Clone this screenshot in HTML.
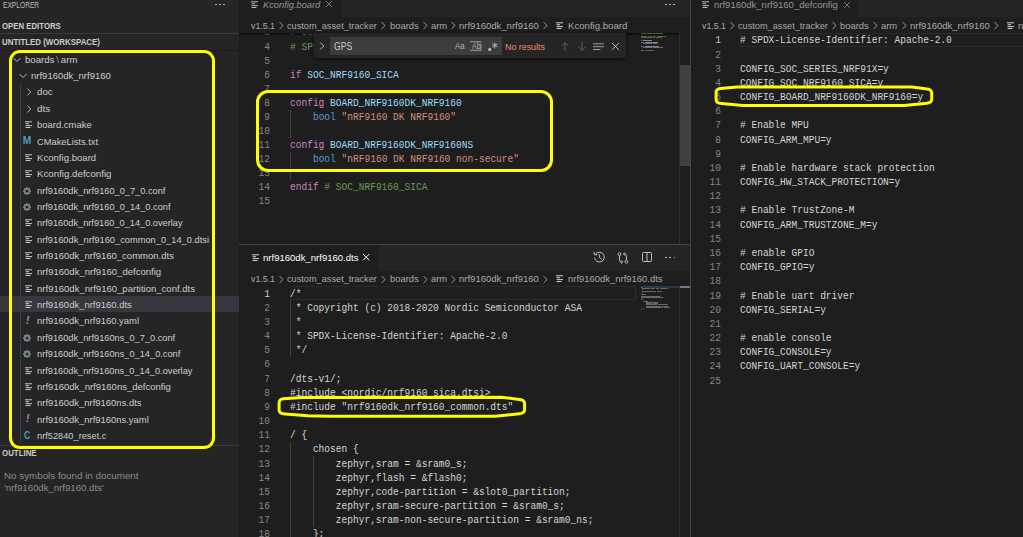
<!DOCTYPE html>
<html><head><meta charset="utf-8"><title>vscode</title>
<style>
html,body{margin:0;padding:0;}
body{width:1023px;height:537px;overflow:hidden;background:#1e1e1e;position:relative;font-family:"Liberation Sans",sans-serif;color:#cccccc;}
.a{position:absolute;white-space:pre;}
.ui{font-family:"Liberation Sans",sans-serif;font-size:9.4px;line-height:16px;color:#cccccc;}
.m{font-family:"Liberation Mono",monospace;font-size:10.4px;line-height:14px;color:#d4d4d4;transform-origin:0 50%;transform:scaleX(0.9181)}
.ln{font-family:"Liberation Mono",monospace;font-size:10.4px;line-height:14px;color:#858585;text-align:right;width:30px;transform-origin:100% 50%;transform:scaleX(0.9181)}
.c{color:#6a9955}.k{color:#c586c0}.v{color:#9cdcfe}.b{color:#569cd6}.s{color:#ce9178}
.bc{font-size:9.5px;color:#a9a9a9;line-height:16px}
.tr{font-size:9.8px;transform-origin:0 50%;transform:scaleX(0.965)}
.y{position:absolute;border:3.2px solid #ffff00;box-sizing:border-box;}
.g{position:absolute;width:1px;background:#404040;}
svg{position:absolute;overflow:visible}
</style></head><body>

<div class="a" style="left:0;top:0;width:239px;height:537px;background:#252526"></div>
<div class="a ui" style="left:2.8px;top:-3.2px;font-size:8.3px;color:#bbbbbb;transform-origin:0 50%;transform:scaleX(0.80)">EXPLORER</div>
<div class="a" style="left:215px;top:3.5px;width:1.6px;height:1.6px;border-radius:1px;background:#c5c5c5"></div>
<div class="a" style="left:219px;top:3.5px;width:1.6px;height:1.6px;border-radius:1px;background:#c5c5c5"></div>
<div class="a" style="left:223px;top:3.5px;width:1.6px;height:1.6px;border-radius:1px;background:#c5c5c5"></div>
<div class="a ui" style="left:2.2px;top:17.6px;font-size:8.3px;font-weight:bold;color:#cccccc;transform-origin:0 50%;transform:scaleX(0.94)">OPEN EDITORS</div>
<div class="a" style="left:0;top:33px;width:239px;height:1px;background:#3a3a3b"></div>
<div class="a ui" style="left:2.2px;top:34.2px;font-size:8.3px;font-weight:bold;color:#cccccc;transform-origin:0 50%;transform:scaleX(0.95)">UNTITLED (WORKSPACE)</div>
<div class="a" style="left:0;top:49.8px;width:239px;height:1.6px;background:#1b1b1c"></div>
<div class="a" style="left:0;top:296.25px;width:239px;height:15.8px;background:#37373d"></div>
<div class="g" style="left:20px;top:84.27px;height:359.92px;background:#3c3c3d"></div>
<svg style="left:14px;top:56.73px" width="6" height="6" viewBox="0 0 6 6"><path d="M-0.5 1L3 4.5L6.5 1" stroke="#c5c5c5" stroke-width="0.9" fill="none"/></svg>
<div class="a ui" style="left:24.80px;top:51.73px;line-height:16px;font-size:9.8px;color:#cccccc;transform-origin:0 50%;transform:scaleX(0.9797)">boards&#8201;<span style="color:#9a9a9a">\</span>&#8201;arm</div>
<svg style="left:20px;top:73.09px" width="6" height="6" viewBox="0 0 6 6"><path d="M-0.5 1L3 4.5L6.5 1" stroke="#c5c5c5" stroke-width="0.9" fill="none"/></svg>
<div class="a ui" style="left:30.80px;top:68.09px;line-height:16px;font-size:9.8px;color:#cccccc;transform-origin:0 50%;transform:scaleX(0.9702)">nrf9160dk_nrf9160</div>
<svg style="left:26px;top:89.45px" width="6" height="6" viewBox="0 0 6 6"><path d="M1.3 -0.5L4.8 3L1.3 6.5" stroke="#c5c5c5" stroke-width="0.9" fill="none"/></svg>
<div class="a ui" style="left:36.80px;top:84.45px;line-height:16px;font-size:9.8px;color:#cccccc;transform-origin:0 50%;transform:scaleX(0.9875)">doc</div>
<svg style="left:26px;top:105.81px" width="6" height="6" viewBox="0 0 6 6"><path d="M1.3 -0.5L4.8 3L1.3 6.5" stroke="#c5c5c5" stroke-width="0.9" fill="none"/></svg>
<div class="a ui" style="left:36.80px;top:100.81px;line-height:16px;font-size:9.8px;color:#cccccc;transform-origin:0 50%;transform:scaleX(1.0017)">dts</div>
<svg style="left:24.9px;top:121.27px" width="7" height="8" viewBox="0 0 7 8"><path d="M0 0.8H7M0.6 2.7H4M0.6 4.6H7M0.6 6.5H5.4" stroke="#cacaca" stroke-width="1.0" fill="none"/></svg>
<div class="a ui" style="left:36.90px;top:117.17px;line-height:16px;font-size:9.8px;color:#cccccc;transform-origin:0 50%;transform:scaleX(0.9657)">board.cmake</div>
<div class="a ui" style="left:22.8px;top:133.35px;line-height:16.36px;font-size:10.2px;font-weight:bold;color:#519aba">M</div>
<div class="a ui" style="left:36.90px;top:133.53px;line-height:16px;font-size:9.8px;color:#cccccc;transform-origin:0 50%;transform:scaleX(0.9494)">CMakeLists.txt</div>
<svg style="left:24.9px;top:153.99px" width="7" height="8" viewBox="0 0 7 8"><path d="M0 0.8H7M0.6 2.7H4M0.6 4.6H7M0.6 6.5H5.4" stroke="#cacaca" stroke-width="1.0" fill="none"/></svg>
<div class="a ui" style="left:36.90px;top:149.89px;line-height:16px;font-size:9.8px;color:#cccccc;transform-origin:0 50%;transform:scaleX(0.9790)">Kconfig.board</div>
<svg style="left:24.9px;top:170.35px" width="7" height="8" viewBox="0 0 7 8"><path d="M0 0.8H7M0.6 2.7H4M0.6 4.6H7M0.6 6.5H5.4" stroke="#cacaca" stroke-width="1.0" fill="none"/></svg>
<div class="a ui" style="left:36.90px;top:166.25px;line-height:16px;font-size:9.8px;color:#cccccc;transform-origin:0 50%;transform:scaleX(0.9911)">Kconfig.defconfig</div>
<svg style="left:23.1px;top:186.61px" width="8" height="8" viewBox="-4 -4 8 8"><circle r="2.25" fill="none" stroke="#7d909a" stroke-width="1.35"/><g stroke="#7d909a" stroke-width="1.4"><line x1="2.60" y1="0.00" x2="4.00" y2="0.00"/><line x1="1.84" y1="1.84" x2="2.83" y2="2.83"/><line x1="0.00" y1="2.60" x2="0.00" y2="4.00"/><line x1="-1.84" y1="1.84" x2="-2.83" y2="2.83"/><line x1="-2.60" y1="0.00" x2="-4.00" y2="0.00"/><line x1="-1.84" y1="-1.84" x2="-2.83" y2="-2.83"/><line x1="-0.00" y1="-2.60" x2="-0.00" y2="-4.00"/><line x1="1.84" y1="-1.84" x2="2.83" y2="-2.83"/></g></svg>
<div class="a ui" style="left:36.90px;top:182.61px;line-height:16px;font-size:9.8px;color:#cccccc;transform-origin:0 50%;transform:scaleX(0.9428)">nrf9160dk_nrf9160_0_7_0.conf</div>
<svg style="left:23.1px;top:202.97px" width="8" height="8" viewBox="-4 -4 8 8"><circle r="2.25" fill="none" stroke="#7d909a" stroke-width="1.35"/><g stroke="#7d909a" stroke-width="1.4"><line x1="2.60" y1="0.00" x2="4.00" y2="0.00"/><line x1="1.84" y1="1.84" x2="2.83" y2="2.83"/><line x1="0.00" y1="2.60" x2="0.00" y2="4.00"/><line x1="-1.84" y1="1.84" x2="-2.83" y2="2.83"/><line x1="-2.60" y1="0.00" x2="-4.00" y2="0.00"/><line x1="-1.84" y1="-1.84" x2="-2.83" y2="-2.83"/><line x1="-0.00" y1="-2.60" x2="-0.00" y2="-4.00"/><line x1="1.84" y1="-1.84" x2="2.83" y2="-2.83"/></g></svg>
<div class="a ui" style="left:36.90px;top:198.97px;line-height:16px;font-size:9.8px;color:#cccccc;transform-origin:0 50%;transform:scaleX(0.9425)">nrf9160dk_nrf9160_0_14_0.conf</div>
<svg style="left:24.9px;top:219.43px" width="7" height="8" viewBox="0 0 7 8"><path d="M0 0.8H7M0.6 2.7H4M0.6 4.6H7M0.6 6.5H5.4" stroke="#cacaca" stroke-width="1.0" fill="none"/></svg>
<div class="a ui" style="left:36.90px;top:215.33px;line-height:16px;font-size:9.8px;color:#cccccc;transform-origin:0 50%;transform:scaleX(0.9412)">nrf9160dk_nrf9160_0_14_0.overlay</div>
<svg style="left:24.9px;top:235.79px" width="7" height="8" viewBox="0 0 7 8"><path d="M0 0.8H7M0.6 2.7H4M0.6 4.6H7M0.6 6.5H5.4" stroke="#cacaca" stroke-width="1.0" fill="none"/></svg>
<div class="a ui" style="left:36.90px;top:231.69px;line-height:16px;font-size:9.8px;color:#cccccc;transform-origin:0 50%;transform:scaleX(0.9483)">nrf9160dk_nrf9160_common_0_14_0.dtsi</div>
<svg style="left:24.9px;top:252.15px" width="7" height="8" viewBox="0 0 7 8"><path d="M0 0.8H7M0.6 2.7H4M0.6 4.6H7M0.6 6.5H5.4" stroke="#cacaca" stroke-width="1.0" fill="none"/></svg>
<div class="a ui" style="left:36.90px;top:248.05px;line-height:16px;font-size:9.8px;color:#cccccc;transform-origin:0 50%;transform:scaleX(0.9705)">nrf9160dk_nrf9160_common.dts</div>
<svg style="left:24.9px;top:268.51px" width="7" height="8" viewBox="0 0 7 8"><path d="M0 0.8H7M0.6 2.7H4M0.6 4.6H7M0.6 6.5H5.4" stroke="#cacaca" stroke-width="1.0" fill="none"/></svg>
<div class="a ui" style="left:36.90px;top:264.41px;line-height:16px;font-size:9.8px;color:#cccccc;transform-origin:0 50%;transform:scaleX(0.9736)">nrf9160dk_nrf9160_defconfig</div>
<svg style="left:24.9px;top:284.87px" width="7" height="8" viewBox="0 0 7 8"><path d="M0 0.8H7M0.6 2.7H4M0.6 4.6H7M0.6 6.5H5.4" stroke="#cacaca" stroke-width="1.0" fill="none"/></svg>
<div class="a ui" style="left:36.90px;top:280.77px;line-height:16px;font-size:9.8px;color:#cccccc;transform-origin:0 50%;transform:scaleX(0.9734)">nrf9160dk_nrf9160_partition_conf.dts</div>
<svg style="left:24.9px;top:301.23px" width="7" height="8" viewBox="0 0 7 8"><path d="M0 0.8H7M0.6 2.7H4M0.6 4.6H7M0.6 6.5H5.4" stroke="#cacaca" stroke-width="1.0" fill="none"/></svg>
<div class="a ui" style="left:36.90px;top:297.13px;line-height:16px;font-size:9.8px;color:#cccccc;transform-origin:0 50%;transform:scaleX(0.9669)">nrf9160dk_nrf9160.dts</div>
<div class="a ui" style="left:26px;top:313.31px;line-height:16.36px;font-size:10.2px;font-style:italic;font-weight:bold;color:#b77fd6">!</div>
<div class="a ui" style="left:36.90px;top:313.49px;line-height:16px;font-size:9.8px;color:#cccccc;transform-origin:0 50%;transform:scaleX(0.9663)">nrf9160dk_nrf9160.yaml</div>
<svg style="left:23.1px;top:333.85px" width="8" height="8" viewBox="-4 -4 8 8"><circle r="2.25" fill="none" stroke="#7d909a" stroke-width="1.35"/><g stroke="#7d909a" stroke-width="1.4"><line x1="2.60" y1="0.00" x2="4.00" y2="0.00"/><line x1="1.84" y1="1.84" x2="2.83" y2="2.83"/><line x1="0.00" y1="2.60" x2="0.00" y2="4.00"/><line x1="-1.84" y1="1.84" x2="-2.83" y2="2.83"/><line x1="-2.60" y1="0.00" x2="-4.00" y2="0.00"/><line x1="-1.84" y1="-1.84" x2="-2.83" y2="-2.83"/><line x1="-0.00" y1="-2.60" x2="-0.00" y2="-4.00"/><line x1="1.84" y1="-1.84" x2="2.83" y2="-2.83"/></g></svg>
<div class="a ui" style="left:36.90px;top:329.85px;line-height:16px;font-size:9.8px;color:#cccccc;transform-origin:0 50%;transform:scaleX(0.9431)">nrf9160dk_nrf9160ns_0_7_0.conf</div>
<svg style="left:23.1px;top:350.21px" width="8" height="8" viewBox="-4 -4 8 8"><circle r="2.25" fill="none" stroke="#7d909a" stroke-width="1.35"/><g stroke="#7d909a" stroke-width="1.4"><line x1="2.60" y1="0.00" x2="4.00" y2="0.00"/><line x1="1.84" y1="1.84" x2="2.83" y2="2.83"/><line x1="0.00" y1="2.60" x2="0.00" y2="4.00"/><line x1="-1.84" y1="1.84" x2="-2.83" y2="2.83"/><line x1="-2.60" y1="0.00" x2="-4.00" y2="0.00"/><line x1="-1.84" y1="-1.84" x2="-2.83" y2="-2.83"/><line x1="-0.00" y1="-2.60" x2="-0.00" y2="-4.00"/><line x1="1.84" y1="-1.84" x2="2.83" y2="-2.83"/></g></svg>
<div class="a ui" style="left:36.90px;top:346.21px;line-height:16px;font-size:9.8px;color:#cccccc;transform-origin:0 50%;transform:scaleX(0.9429)">nrf9160dk_nrf9160ns_0_14_0.conf</div>
<svg style="left:24.9px;top:366.67px" width="7" height="8" viewBox="0 0 7 8"><path d="M0 0.8H7M0.6 2.7H4M0.6 4.6H7M0.6 6.5H5.4" stroke="#cacaca" stroke-width="1.0" fill="none"/></svg>
<div class="a ui" style="left:36.90px;top:362.57px;line-height:16px;font-size:9.8px;color:#cccccc;transform-origin:0 50%;transform:scaleX(0.9416)">nrf9160dk_nrf9160ns_0_14_0.overlay</div>
<svg style="left:24.9px;top:383.03px" width="7" height="8" viewBox="0 0 7 8"><path d="M0 0.8H7M0.6 2.7H4M0.6 4.6H7M0.6 6.5H5.4" stroke="#cacaca" stroke-width="1.0" fill="none"/></svg>
<div class="a ui" style="left:36.90px;top:378.93px;line-height:16px;font-size:9.8px;color:#cccccc;transform-origin:0 50%;transform:scaleX(0.9716)">nrf9160dk_nrf9160ns_defconfig</div>
<svg style="left:24.9px;top:399.39px" width="7" height="8" viewBox="0 0 7 8"><path d="M0 0.8H7M0.6 2.7H4M0.6 4.6H7M0.6 6.5H5.4" stroke="#cacaca" stroke-width="1.0" fill="none"/></svg>
<div class="a ui" style="left:36.90px;top:395.29px;line-height:16px;font-size:9.8px;color:#cccccc;transform-origin:0 50%;transform:scaleX(0.9650)">nrf9160dk_nrf9160ns.dts</div>
<div class="a ui" style="left:26px;top:411.47px;line-height:16.36px;font-size:10.2px;font-style:italic;font-weight:bold;color:#b77fd6">!</div>
<div class="a ui" style="left:36.90px;top:411.65px;line-height:16px;font-size:9.8px;color:#cccccc;transform-origin:0 50%;transform:scaleX(0.9637)">nrf9160dk_nrf9160ns.yaml</div>
<div class="a ui" style="left:24.20px;top:427.81px;line-height:16px;font-size:10.4px;color:#519aba;transform-origin:0 50%;transform:scaleX(0.8383);font-weight:bold">C</div>
<div class="a ui" style="left:36.90px;top:428.01px;line-height:16px;font-size:9.8px;color:#cccccc;transform-origin:0 50%;transform:scaleX(0.9438)">nrf52840_reset.c</div>
<div class="a" style="left:0;top:445px;width:239px;height:1px;background:#3a3a3b"></div>
<div class="a ui" style="left:2.4px;top:445.3px;font-size:8.3px;font-weight:bold;color:#cccccc;transform-origin:0 50%;transform:scaleX(0.95)">OUTLINE</div>
<div class="a ui" style="left:4px;top:467.6px;font-size:9.8px;color:#8b8b8b">No symbols found in document</div>
<div class="a ui" style="left:4px;top:480.3px;font-size:9.6px;color:#8b8b8b">'nrf9160dk_nrf9160.dts'</div>
<div class="y" style="left:8.5px;top:49.7px;width:206.1px;height:399.3px;border-radius:11px;border-width:3.4px"></div>
<div class="a" style="left:239px;top:0;width:452px;height:17px;background:#252526"></div>
<div class="a" style="left:239px;top:0;width:101.5px;height:17px;background:#1e1e1e"></div>
<svg style="left:251.3px;top:1.10px" width="7" height="8" viewBox="0 0 7 8"><path d="M0 0.8H7M0.6 2.7H4M0.6 4.6H7M0.6 6.5H5.4" stroke="#b8b8b8" stroke-width="1.0" fill="none"/></svg>
<div class="a ui" style="left:262.50px;top:-3.10px;line-height:16px;font-size:9.8px;color:#959595;transform-origin:0 50%;transform:scaleX(0.9476);font-style:italic">Kconfig.board</div>
<svg style="left:326px;top:1.2px" width="6" height="6" viewBox="0 0 6 6"><path d="M0 0L6 6M6 0L0 6" stroke="#8c8c8c" stroke-width="0.8"/></svg>
<div class="a" style="left:665.30px;top:3.8px;width:1.7px;height:1.7px;border-radius:1px;background:#c5c5c5"></div><div class="a" style="left:669.35px;top:3.8px;width:1.7px;height:1.7px;border-radius:1px;background:#c5c5c5"></div><div class="a" style="left:673.40px;top:3.8px;width:1.7px;height:1.7px;border-radius:1px;background:#c5c5c5"></div>
<div class="a" style="left:239px;top:33px;width:452px;height:211px;overflow:hidden">
<div class="a ln" style="left:1.20px;top:-7.55px;line-height:14.05px">3</div>
<div class="a m" style="left:51px;top:-7.55px;line-height:14.05px"><span class="c"># Copyright (c) 2018 Nordic Semiconductor ASA</span></div>
<div class="a ln" style="left:1.20px;top:6.50px;line-height:14.05px">4</div>
<div class="a m" style="left:51px;top:6.50px;line-height:14.05px"><span class="c"># SPDX-License-Identifier: Apache-2.0</span></div>
<div class="a ln" style="left:1.20px;top:20.55px;line-height:14.05px">5</div>
<div class="a ln" style="left:1.20px;top:34.60px;line-height:14.05px">6</div>
<div class="a m" style="left:51px;top:34.60px;line-height:14.05px"><span class="k">if</span> <span class="v">SOC_NRF9160_SICA</span></div>
<div class="a ln" style="left:1.20px;top:48.65px;line-height:14.05px">7</div>
<div class="a ln" style="left:1.20px;top:62.70px;line-height:14.05px">8</div>
<div class="a m" style="left:51px;top:62.70px;line-height:14.05px"><span class="k">config</span> <span class="v">BOARD_NRF9160DK_NRF9160</span></div>
<div class="a ln" style="left:1.20px;top:76.75px;line-height:14.05px">9</div>
<div class="a m" style="left:51px;top:76.75px;line-height:14.05px">    <span class="b">bool</span> <span class="s">"nRF9160 DK NRF9160"</span></div>
<div class="a ln" style="left:1.20px;top:90.80px;line-height:14.05px">10</div>
<div class="a ln" style="left:1.20px;top:104.85px;line-height:14.05px">11</div>
<div class="a m" style="left:51px;top:104.85px;line-height:14.05px"><span class="k">config</span> <span class="v">BOARD_NRF9160DK_NRF9160NS</span></div>
<div class="a ln" style="left:1.20px;top:118.90px;line-height:14.05px">12</div>
<div class="a m" style="left:51px;top:118.90px;line-height:14.05px">    <span class="b">bool</span> <span class="s">"nRF9160 DK NRF9160 non-secure"</span></div>
<div class="a ln" style="left:1.20px;top:132.95px;line-height:14.05px">13</div>
<div class="a ln" style="left:1.20px;top:147.00px;line-height:14.05px">14</div>
<div class="a m" style="left:51px;top:147.00px;line-height:14.05px"><span class="k">endif</span> <span class="c"># SOC_NRF9160_SICA</span></div>
<div class="a ln" style="left:1.20px;top:161.05px;line-height:14.05px">15</div>
<div class="g" style="left:51px;top:76.75px;height:28.10px"></div>
<div class="g" style="left:51px;top:118.90px;height:28.10px"></div>
</div>
<div class="a" style="left:239px;top:17px;width:451px;height:16px;background:#1e1e1e"></div>
<div class="a ui" style="left:250.80px;top:17.90px;line-height:16px;font-size:9.8px;color:#a9a9a9;transform-origin:0 50%;transform:scaleX(0.8988)">v1.5.1</div><div class="a ui" style="left:286.80px;top:17.90px;line-height:16px;font-size:9.8px;color:#a9a9a9;transform-origin:0 50%;transform:scaleX(0.9380)">custom_asset_tracker</div><div class="a ui" style="left:389.50px;top:17.90px;line-height:16px;font-size:9.8px;color:#a9a9a9;transform-origin:0 50%;transform:scaleX(0.9610)">boards</div><div class="a ui" style="left:430.60px;top:17.90px;line-height:16px;font-size:9.8px;color:#a9a9a9;transform-origin:0 50%;transform:scaleX(0.9600)">arm</div><div class="a ui" style="left:459.20px;top:17.90px;line-height:16px;font-size:9.8px;color:#a9a9a9;transform-origin:0 50%;transform:scaleX(0.9714)">nrf9160dk_nrf9160</div><div class="a ui" style="left:567.50px;top:17.90px;line-height:16px;font-size:9.8px;color:#a9a9a9;transform-origin:0 50%;transform:scaleX(0.9807)">Kconfig.board</div><svg style="left:278.70px;top:21.40px" width="5" height="9" viewBox="0 0 5 9"><path d="M0.6 1.1L4.0 4.5L0.6 7.9" stroke="#a8a8a8" stroke-width="0.9" fill="none"/></svg><svg style="left:381.20px;top:21.40px" width="5" height="9" viewBox="0 0 5 9"><path d="M0.6 1.1L4.0 4.5L0.6 7.9" stroke="#a8a8a8" stroke-width="0.9" fill="none"/></svg><svg style="left:422.60px;top:21.40px" width="5" height="9" viewBox="0 0 5 9"><path d="M0.6 1.1L4.0 4.5L0.6 7.9" stroke="#a8a8a8" stroke-width="0.9" fill="none"/></svg><svg style="left:451.30px;top:21.40px" width="5" height="9" viewBox="0 0 5 9"><path d="M0.6 1.1L4.0 4.5L0.6 7.9" stroke="#a8a8a8" stroke-width="0.9" fill="none"/></svg><svg style="left:542.70px;top:21.40px" width="5" height="9" viewBox="0 0 5 9"><path d="M0.6 1.1L4.0 4.5L0.6 7.9" stroke="#a8a8a8" stroke-width="0.9" fill="none"/></svg><svg style="left:556.1px;top:21.80px" width="7" height="8" viewBox="0 0 7 8"><path d="M0 0.8H7M0.6 2.7H4M0.6 4.6H7M0.6 6.5H5.4" stroke="#d0d0d0" stroke-width="1.0" fill="none"/></svg>
<div class="a" style="left:239px;top:33px;width:440px;height:3px;background:linear-gradient(#000000aa,#00000000)"></div>
<div class="a" style="left:314px;top:33px;width:311.8px;height:25px;background:#252526;box-shadow:0 1px 4px #000000aa"></div>
<div class="a" style="left:330px;top:36.8px;width:171.7px;height:18px;background:#3c3c3c"></div>
<svg style="left:319px;top:43.00px" width="6" height="6" viewBox="0 0 6 6"><path d="M1.3 -0.5L4.8 3L1.3 6.5" stroke="#c5c5c5" stroke-width="0.9" fill="none"/></svg>
<div class="a ui" style="left:333.50px;top:39.00px;line-height:16px;font-size:10px;color:#cccccc;transform-origin:0 50%;transform:scaleX(0.8600)">GPS</div>
<div class="a ui" style="left:455.20px;top:38.30px;line-height:16px;font-size:9px;color:#b8b8b8;transform-origin:0 50%;transform:scaleX(0.8896)">Aa</div>
<div class="a ui" style="left:471.60px;top:39.40px;line-height:16px;font-size:8.2px;color:#b8b8b8;transform-origin:0 50%;transform:scaleX(0.8587)">Ab</div>
<svg style="left:470.4px;top:41px" width="12" height="10" viewBox="0 0 12 10"><path d="M0 0.7H11.4M0 9.3H11.4M10.9 2.5V9.3" stroke="#b8b8b8" stroke-width="0.8" fill="none"/></svg>
<svg style="left:487.5px;top:41.5px" width="10" height="10" viewBox="0 0 10 10"><rect x="0.4" y="6.2" width="2.7" height="2.7" fill="#c0c0c0"/><path d="M6.8 0.4V6.4M4.2 1.9L9.4 4.9M9.4 1.9L4.2 4.9" stroke="#c0c0c0" stroke-width="0.85" fill="none"/></svg>
<div class="a ui" style="left:505.40px;top:39.20px;line-height:16px;font-size:9px;color:#f48771;transform-origin:0 50%;transform:scaleX(0.9848)">No results</div>
<svg style="left:561px;top:42px" width="8" height="9" viewBox="0 0 8 9"><path d="M4 0.5V9M0.5 4L4 0.5L7.5 4" stroke="#646464" stroke-width="0.9" fill="none"/></svg>
<svg style="left:578.3px;top:42px" width="8" height="9" viewBox="0 0 8 9"><path d="M4 0V8.5M0.5 5L4 8.5L7.5 5" stroke="#646464" stroke-width="0.9" fill="none"/></svg>
<svg style="left:592.7px;top:42.5px" width="11" height="8" viewBox="0 0 11 8"><path d="M0 0.9H10.8M0 3.7H11M0 6.5H7.4" stroke="#c0c0c0" stroke-width="0.8" fill="none"/></svg>
<svg style="left:611.8px;top:43px" width="6.8" height="6.8" viewBox="0 0 6.8 6.8"><path d="M0 0L6.8 6.8M6.8 0L0 6.8" stroke="#d4d4d4" stroke-width="0.9"/></svg>
<div class="a" style="left:679px;top:33px;width:1px;height:211px;background:#303030"></div>
<div class="a" style="left:679.6px;top:64.5px;width:10px;height:101.5px;background:#414141"></div>
<div class="a" style="left:641.20px;top:33.20px;width:0.55px;height:1px;background:#6a9955;opacity:0.6"></div><div class="a" style="left:642.30px;top:33.20px;width:3.85px;height:1px;background:#6a9955;opacity:0.6"></div><div class="a" style="left:646.70px;top:33.20px;width:1.10px;height:1px;background:#6a9955;opacity:0.6"></div><div class="a" style="left:648.35px;top:33.20px;width:3.85px;height:1px;background:#6a9955;opacity:0.6"></div><div class="a" style="left:652.75px;top:33.20px;width:2.75px;height:1px;background:#6a9955;opacity:0.6"></div><div class="a" style="left:656.05px;top:33.20px;width:7.15px;height:1px;background:#6a9955;opacity:0.6"></div><div class="a" style="left:641.20px;top:35.76px;width:0.55px;height:1px;background:#6a9955;opacity:0.6"></div><div class="a" style="left:642.30px;top:35.76px;width:4.95px;height:1px;background:#6a9955;opacity:0.6"></div><div class="a" style="left:647.80px;top:35.76px;width:1.65px;height:1px;background:#6a9955;opacity:0.6"></div><div class="a" style="left:650.00px;top:35.76px;width:2.20px;height:1px;background:#6a9955;opacity:0.6"></div><div class="a" style="left:652.75px;top:35.76px;width:3.30px;height:1px;background:#6a9955;opacity:0.6"></div><div class="a" style="left:656.60px;top:35.76px;width:7.15px;height:1px;background:#6a9955;opacity:0.6"></div><div class="a" style="left:664.30px;top:35.76px;width:1.65px;height:1px;background:#6a9955;opacity:0.6"></div><div class="a" style="left:641.20px;top:37.04px;width:0.55px;height:1px;background:#6a9955;opacity:0.6"></div><div class="a" style="left:642.30px;top:37.04px;width:13.20px;height:1px;background:#6a9955;opacity:0.6"></div><div class="a" style="left:656.05px;top:37.04px;width:5.50px;height:1px;background:#6a9955;opacity:0.6"></div><div class="a" style="left:641.20px;top:39.60px;width:1.10px;height:1px;background:#c586c0;opacity:0.6"></div><div class="a" style="left:642.85px;top:39.60px;width:8.80px;height:1px;background:#9cdcfe;opacity:0.6"></div><div class="a" style="left:641.20px;top:42.16px;width:3.30px;height:1px;background:#c586c0;opacity:0.6"></div><div class="a" style="left:645.05px;top:42.16px;width:12.65px;height:1px;background:#9cdcfe;opacity:0.6"></div><div class="a" style="left:643.40px;top:43.44px;width:2.20px;height:1px;background:#569cd6;opacity:0.6"></div><div class="a" style="left:646.15px;top:43.44px;width:4.40px;height:1px;background:#ce9178;opacity:0.6"></div><div class="a" style="left:651.10px;top:43.44px;width:1.10px;height:1px;background:#ce9178;opacity:0.6"></div><div class="a" style="left:652.75px;top:43.44px;width:4.40px;height:1px;background:#ce9178;opacity:0.6"></div><div class="a" style="left:641.20px;top:46.00px;width:3.30px;height:1px;background:#c586c0;opacity:0.6"></div><div class="a" style="left:645.05px;top:46.00px;width:13.75px;height:1px;background:#9cdcfe;opacity:0.6"></div><div class="a" style="left:643.40px;top:47.28px;width:2.20px;height:1px;background:#569cd6;opacity:0.6"></div><div class="a" style="left:646.15px;top:47.28px;width:4.40px;height:1px;background:#ce9178;opacity:0.6"></div><div class="a" style="left:651.10px;top:47.28px;width:1.10px;height:1px;background:#ce9178;opacity:0.6"></div><div class="a" style="left:652.75px;top:47.28px;width:3.85px;height:1px;background:#ce9178;opacity:0.6"></div><div class="a" style="left:657.15px;top:47.28px;width:6.05px;height:1px;background:#ce9178;opacity:0.6"></div><div class="a" style="left:641.20px;top:49.84px;width:2.75px;height:1px;background:#c586c0;opacity:0.6"></div><div class="a" style="left:644.50px;top:49.84px;width:0.55px;height:1px;background:#6a9955;opacity:0.6"></div><div class="a" style="left:645.60px;top:49.84px;width:8.80px;height:1px;background:#6a9955;opacity:0.6"></div>
<div class="y" style="left:256px;top:89.8px;width:296.6px;height:82.5px;border-radius:12px"></div>
<div class="a" style="left:239px;top:244px;width:451px;height:1px;background:#444444"></div>
<div class="a" style="left:689.6px;top:0;width:1.6px;height:537px;background:#444444"></div>
<div class="a" style="left:239px;top:245px;width:450.6px;height:25.6px;background:#252526"></div>
<div class="a" style="left:239px;top:245px;width:140px;height:25.6px;background:#1e1e1e"></div>
<svg style="left:251.5px;top:253.50px" width="7" height="8" viewBox="0 0 7 8"><path d="M0 0.8H7M0.6 2.7H4M0.6 4.6H7M0.6 6.5H5.4" stroke="#d0d0d0" stroke-width="1.0" fill="none"/></svg>
<div class="a ui" style="left:262.50px;top:249.50px;line-height:16px;font-size:9.8px;color:#ffffff;transform-origin:0 50%;transform:scaleX(0.9740)">nrf9160dk_nrf9160.dts</div>
<svg style="left:363.3px;top:254.0px" width="6.4" height="6.4" viewBox="0 0 6.4 6.4"><path d="M0 0L6.4 6.4M6.4 0L0 6.4" stroke="#f0f0f0" stroke-width="1.0"/></svg>
<div class="a ui" style="left:250.80px;top:271.00px;line-height:16px;font-size:9.8px;color:#a9a9a9;transform-origin:0 50%;transform:scaleX(0.8988)">v1.5.1</div><div class="a ui" style="left:286.80px;top:271.00px;line-height:16px;font-size:9.8px;color:#a9a9a9;transform-origin:0 50%;transform:scaleX(0.9380)">custom_asset_tracker</div><div class="a ui" style="left:389.50px;top:271.00px;line-height:16px;font-size:9.8px;color:#a9a9a9;transform-origin:0 50%;transform:scaleX(0.9610)">boards</div><div class="a ui" style="left:430.60px;top:271.00px;line-height:16px;font-size:9.8px;color:#a9a9a9;transform-origin:0 50%;transform:scaleX(0.9600)">arm</div><div class="a ui" style="left:459.20px;top:271.00px;line-height:16px;font-size:9.8px;color:#a9a9a9;transform-origin:0 50%;transform:scaleX(0.9714)">nrf9160dk_nrf9160</div><div class="a ui" style="left:567.50px;top:271.00px;line-height:16px;font-size:9.8px;color:#a9a9a9;transform-origin:0 50%;transform:scaleX(0.9638)">nrf9160dk_nrf9160.dts</div><svg style="left:278.70px;top:274.50px" width="5" height="9" viewBox="0 0 5 9"><path d="M0.6 1.1L4.0 4.5L0.6 7.9" stroke="#a8a8a8" stroke-width="0.9" fill="none"/></svg><svg style="left:381.20px;top:274.50px" width="5" height="9" viewBox="0 0 5 9"><path d="M0.6 1.1L4.0 4.5L0.6 7.9" stroke="#a8a8a8" stroke-width="0.9" fill="none"/></svg><svg style="left:422.60px;top:274.50px" width="5" height="9" viewBox="0 0 5 9"><path d="M0.6 1.1L4.0 4.5L0.6 7.9" stroke="#a8a8a8" stroke-width="0.9" fill="none"/></svg><svg style="left:451.30px;top:274.50px" width="5" height="9" viewBox="0 0 5 9"><path d="M0.6 1.1L4.0 4.5L0.6 7.9" stroke="#a8a8a8" stroke-width="0.9" fill="none"/></svg><svg style="left:542.70px;top:274.50px" width="5" height="9" viewBox="0 0 5 9"><path d="M0.6 1.1L4.0 4.5L0.6 7.9" stroke="#a8a8a8" stroke-width="0.9" fill="none"/></svg><svg style="left:556.1px;top:274.90px" width="7" height="8" viewBox="0 0 7 8"><path d="M0 0.8H7M0.6 2.7H4M0.6 4.6H7M0.6 6.5H5.4" stroke="#d0d0d0" stroke-width="1.0" fill="none"/></svg>
<div class="a" style="left:290px;top:286.30px;width:346px;height:14.17px;box-sizing:border-box;border:1px solid #2b2b2b"></div>
<div class="a ln" style="left:240.20px;top:286.50px;line-height:14.17px;color:#c6c6c6">1</div>
<div class="a m" style="left:290px;top:286.50px;line-height:14.17px">/*</div>
<div class="a ln" style="left:240.20px;top:300.67px;line-height:14.17px">2</div>
<div class="a m" style="left:290px;top:300.67px;line-height:14.17px"> * Copyright (c) 2018-2020 Nordic Semiconductor ASA</div>
<div class="a ln" style="left:240.20px;top:314.84px;line-height:14.17px">3</div>
<div class="a m" style="left:290px;top:314.84px;line-height:14.17px"> *</div>
<div class="a ln" style="left:240.20px;top:329.01px;line-height:14.17px">4</div>
<div class="a m" style="left:290px;top:329.01px;line-height:14.17px"> * SPDX-License-Identifier: Apache-2.0</div>
<div class="a ln" style="left:240.20px;top:343.18px;line-height:14.17px">5</div>
<div class="a m" style="left:290px;top:343.18px;line-height:14.17px"> */</div>
<div class="a ln" style="left:240.20px;top:357.35px;line-height:14.17px">6</div>
<div class="a ln" style="left:240.20px;top:371.52px;line-height:14.17px">7</div>
<div class="a m" style="left:290px;top:371.52px;line-height:14.17px">/dts-v1/;</div>
<div class="a ln" style="left:240.20px;top:385.69px;line-height:14.17px">8</div>
<div class="a m" style="left:290px;top:385.69px;line-height:14.17px">#include &lt;nordic/nrf9160_sica.dtsi&gt;</div>
<div class="a ln" style="left:240.20px;top:399.86px;line-height:14.17px">9</div>
<div class="a m" style="left:290px;top:399.86px;line-height:14.17px">#include "nrf9160dk_nrf9160_common.dts"</div>
<div class="a ln" style="left:240.20px;top:414.03px;line-height:14.17px">10</div>
<div class="a ln" style="left:240.20px;top:428.20px;line-height:14.17px">11</div>
<div class="a m" style="left:290px;top:428.20px;line-height:14.17px">/ {</div>
<div class="a ln" style="left:240.20px;top:442.37px;line-height:14.17px">12</div>
<div class="a m" style="left:290px;top:442.37px;line-height:14.17px">    chosen {</div>
<div class="a ln" style="left:240.20px;top:456.54px;line-height:14.17px">13</div>
<div class="a m" style="left:290px;top:456.54px;line-height:14.17px">        zephyr,sram = &amp;sram0_s;</div>
<div class="a ln" style="left:240.20px;top:470.71px;line-height:14.17px">14</div>
<div class="a m" style="left:290px;top:470.71px;line-height:14.17px">        zephyr,flash = &amp;flash0;</div>
<div class="a ln" style="left:240.20px;top:484.88px;line-height:14.17px">15</div>
<div class="a m" style="left:290px;top:484.88px;line-height:14.17px">        zephyr,code-partition = &amp;slot0_partition;</div>
<div class="a ln" style="left:240.20px;top:499.05px;line-height:14.17px">16</div>
<div class="a m" style="left:290px;top:499.05px;line-height:14.17px">        zephyr,sram-secure-partition = &amp;sram0_s;</div>
<div class="a ln" style="left:240.20px;top:513.22px;line-height:14.17px">17</div>
<div class="a m" style="left:290px;top:513.22px;line-height:14.17px">        zephyr,sram-non-secure-partition = &amp;sram0_ns;</div>
<div class="a ln" style="left:240.20px;top:527.39px;line-height:14.17px">18</div>
<div class="a m" style="left:290px;top:527.39px;line-height:14.17px">    };</div>
<div class="g" style="left:290px;top:300.47px;height:56.68px"></div>
<div class="g" style="left:290px;top:442.17px;height:99.19px"></div>
<div class="g" style="left:312.92px;top:456.34px;height:70.85px"></div>
<div class="a" style="left:641.2px;top:286.3px;width:38px;height:1.3px;background:#264f78;opacity:0.6"></div>
<div class="a" style="left:641.20px;top:286.80px;width:1.10px;height:1px;background:#d4d4d4;opacity:0.4"></div><div class="a" style="left:641.75px;top:288.05px;width:0.55px;height:1px;background:#d4d4d4;opacity:0.4"></div><div class="a" style="left:642.85px;top:288.05px;width:4.95px;height:1px;background:#d4d4d4;opacity:0.4"></div><div class="a" style="left:648.35px;top:288.05px;width:1.65px;height:1px;background:#d4d4d4;opacity:0.4"></div><div class="a" style="left:650.55px;top:288.05px;width:4.95px;height:1px;background:#d4d4d4;opacity:0.4"></div><div class="a" style="left:656.05px;top:288.05px;width:3.30px;height:1px;background:#d4d4d4;opacity:0.4"></div><div class="a" style="left:659.90px;top:288.05px;width:7.15px;height:1px;background:#d4d4d4;opacity:0.4"></div><div class="a" style="left:667.60px;top:288.05px;width:1.65px;height:1px;background:#d4d4d4;opacity:0.4"></div><div class="a" style="left:641.75px;top:289.30px;width:0.55px;height:1px;background:#d4d4d4;opacity:0.4"></div><div class="a" style="left:641.75px;top:290.55px;width:0.55px;height:1px;background:#d4d4d4;opacity:0.4"></div><div class="a" style="left:642.85px;top:290.55px;width:13.20px;height:1px;background:#d4d4d4;opacity:0.4"></div><div class="a" style="left:656.60px;top:290.55px;width:5.50px;height:1px;background:#d4d4d4;opacity:0.4"></div><div class="a" style="left:641.75px;top:291.80px;width:1.10px;height:1px;background:#d4d4d4;opacity:0.4"></div><div class="a" style="left:641.20px;top:294.30px;width:4.95px;height:1px;background:#d4d4d4;opacity:0.4"></div><div class="a" style="left:641.20px;top:295.55px;width:4.40px;height:1px;background:#d4d4d4;opacity:0.4"></div><div class="a" style="left:646.15px;top:295.55px;width:14.30px;height:1px;background:#d4d4d4;opacity:0.4"></div><div class="a" style="left:641.20px;top:296.80px;width:4.40px;height:1px;background:#d4d4d4;opacity:0.4"></div><div class="a" style="left:646.15px;top:296.80px;width:16.50px;height:1px;background:#d4d4d4;opacity:0.4"></div><div class="a" style="left:641.20px;top:299.30px;width:0.55px;height:1px;background:#d4d4d4;opacity:0.4"></div><div class="a" style="left:642.30px;top:299.30px;width:0.55px;height:1px;background:#d4d4d4;opacity:0.4"></div><div class="a" style="left:643.40px;top:300.55px;width:3.30px;height:1px;background:#d4d4d4;opacity:0.4"></div><div class="a" style="left:647.25px;top:300.55px;width:0.55px;height:1px;background:#d4d4d4;opacity:0.4"></div><div class="a" style="left:645.60px;top:301.80px;width:6.05px;height:1px;background:#d4d4d4;opacity:0.4"></div><div class="a" style="left:652.20px;top:301.80px;width:0.55px;height:1px;background:#d4d4d4;opacity:0.4"></div><div class="a" style="left:653.30px;top:301.80px;width:4.95px;height:1px;background:#d4d4d4;opacity:0.4"></div><div class="a" style="left:645.60px;top:303.05px;width:6.60px;height:1px;background:#d4d4d4;opacity:0.4"></div><div class="a" style="left:652.75px;top:303.05px;width:0.55px;height:1px;background:#d4d4d4;opacity:0.4"></div><div class="a" style="left:653.85px;top:303.05px;width:4.40px;height:1px;background:#d4d4d4;opacity:0.4"></div><div class="a" style="left:645.60px;top:304.30px;width:11.55px;height:1px;background:#d4d4d4;opacity:0.4"></div><div class="a" style="left:657.70px;top:304.30px;width:0.55px;height:1px;background:#d4d4d4;opacity:0.4"></div><div class="a" style="left:658.80px;top:304.30px;width:9.35px;height:1px;background:#d4d4d4;opacity:0.4"></div><div class="a" style="left:645.60px;top:305.55px;width:15.40px;height:1px;background:#d4d4d4;opacity:0.4"></div><div class="a" style="left:661.55px;top:305.55px;width:0.55px;height:1px;background:#d4d4d4;opacity:0.4"></div><div class="a" style="left:662.65px;top:305.55px;width:4.95px;height:1px;background:#d4d4d4;opacity:0.4"></div><div class="a" style="left:645.60px;top:306.80px;width:17.60px;height:1px;background:#d4d4d4;opacity:0.4"></div><div class="a" style="left:663.75px;top:306.80px;width:0.55px;height:1px;background:#d4d4d4;opacity:0.4"></div><div class="a" style="left:664.85px;top:306.80px;width:5.50px;height:1px;background:#d4d4d4;opacity:0.4"></div><div class="a" style="left:643.40px;top:308.05px;width:1.10px;height:1px;background:#d4d4d4;opacity:0.4"></div><div class="a" style="left:641.20px;top:309.30px;width:1.10px;height:1px;background:#d4d4d4;opacity:0.4"></div>
<div class="a" style="left:679px;top:286px;width:1px;height:251px;background:#303030"></div>
<div class="a" style="left:679.8px;top:286.3px;width:9.8px;height:1.6px;background:#7a7a7a"></div>
<svg style="left:592.6px;top:251.3px" width="12" height="12" viewBox="0 0 12 12"><path d="M2.6 3.0A4.9 4.9 0 1 1 1.5 6.6" stroke="#c5c5c5" stroke-width="0.95" fill="none"/><path d="M0.9 0.9L1.5 3.9L4.4 3.5" stroke="#c5c5c5" stroke-width="0.95" fill="none"/><path d="M6.3 3.2V6.3L8.6 8.3" stroke="#c5c5c5" stroke-width="0.95" fill="none"/></svg>
<svg style="left:616.8px;top:251.9px" width="12" height="12" viewBox="0 0 12 12"><circle cx="2.5" cy="2.2" r="1.4" stroke="#c5c5c5" stroke-width="0.95" fill="none"/><circle cx="9.4" cy="9.7" r="1.4" stroke="#c5c5c5" stroke-width="0.95" fill="none"/><path d="M2.5 3.6V8.4Q2.5 10 4.2 10H5.4M9.4 8.3V3.6Q9.4 2 7.8 2H6.6M8 0.4L6.4 2L8 3.6M4.2 8.4L5.8 10L4.2 11.6" stroke="#c5c5c5" stroke-width="0.95" fill="none"/></svg>
<svg style="left:641.8px;top:252.1px" width="10" height="10" viewBox="0 0 10 10"><rect x="0.5" y="0.5" width="9" height="9" rx="0.9" stroke="#c5c5c5" stroke-width="0.95" fill="none"/><path d="M5 0.5V9.5" stroke="#c5c5c5" stroke-width="0.95"/></svg>
<div class="a" style="left:665.40px;top:256.8px;width:1.7px;height:1.7px;border-radius:1px;background:#c5c5c5"></div><div class="a" style="left:669.45px;top:256.8px;width:1.7px;height:1.7px;border-radius:1px;background:#c5c5c5"></div><div class="a" style="left:673.50px;top:256.8px;width:1.7px;height:1.7px;border-radius:1px;background:#c5c5c5"></div>
<svg style="left:0;top:0" width="1023" height="537" viewBox="0 0 1023 537"><path d="M283.5 398.8L302 397.4L501 397.3L519.5 399.4Q524.6 399.9 524.6 403.6L524.6 409.6Q524.6 413.3 519.5 413.8L495 416.3L330 416.3L308 415.7L285 414.1Q279.1 413.7 279.1 410L279.1 403Q279.1 399.2 283.5 398.8Z" stroke="#ffff00" stroke-width="3" fill="none" stroke-linejoin="round"/></svg>
<div class="a" style="left:691.2px;top:0;width:332px;height:17px;background:#252526"></div>
<div class="a" style="left:691.2px;top:0;width:167.3px;height:17px;background:#1e1e1e"></div>
<svg style="left:702px;top:1.10px" width="7" height="8" viewBox="0 0 7 8"><path d="M0 0.8H7M0.6 2.7H4M0.6 4.6H7M0.6 6.5H5.4" stroke="#b8b8b8" stroke-width="1.0" fill="none"/></svg>
<div class="a ui" style="left:713.60px;top:-3.10px;line-height:16px;font-size:9.8px;color:#959595;transform-origin:0 50%;transform:scaleX(0.9712)">nrf9160dk_nrf9160_defconfig</div>
<svg style="left:844px;top:1.7px" width="6" height="6" viewBox="0 0 6 6"><path d="M0 0L6 6M6 0L0 6" stroke="#8c8c8c" stroke-width="0.8"/></svg>
<div class="a" style="left:691.2px;top:17px;width:332px;height:16px;overflow:hidden"><div class="a ui" style="left:10.50px;top:0.90px;line-height:16px;font-size:9.8px;color:#a9a9a9;transform-origin:0 50%;transform:scaleX(0.8988)">v1.5.1</div><div class="a ui" style="left:46.50px;top:0.90px;line-height:16px;font-size:9.8px;color:#a9a9a9;transform-origin:0 50%;transform:scaleX(0.9380)">custom_asset_tracker</div><div class="a ui" style="left:149.20px;top:0.90px;line-height:16px;font-size:9.8px;color:#a9a9a9;transform-origin:0 50%;transform:scaleX(0.9610)">boards</div><div class="a ui" style="left:190.30px;top:0.90px;line-height:16px;font-size:9.8px;color:#a9a9a9;transform-origin:0 50%;transform:scaleX(0.9600)">arm</div><div class="a ui" style="left:218.90px;top:0.90px;line-height:16px;font-size:9.8px;color:#a9a9a9;transform-origin:0 50%;transform:scaleX(0.9714)">nrf9160dk_nrf9160</div><div class="a ui" style="left:327.20px;top:0.90px;line-height:16px;font-size:9.8px;color:#a9a9a9;transform-origin:0 50%;transform:scaleX(0.9649)">nrf9160dk_nrf9160_defconfig</div><svg style="left:38.40px;top:4.40px" width="5" height="9" viewBox="0 0 5 9"><path d="M0.6 1.1L4.0 4.5L0.6 7.9" stroke="#a8a8a8" stroke-width="0.9" fill="none"/></svg><svg style="left:140.90px;top:4.40px" width="5" height="9" viewBox="0 0 5 9"><path d="M0.6 1.1L4.0 4.5L0.6 7.9" stroke="#a8a8a8" stroke-width="0.9" fill="none"/></svg><svg style="left:182.30px;top:4.40px" width="5" height="9" viewBox="0 0 5 9"><path d="M0.6 1.1L4.0 4.5L0.6 7.9" stroke="#a8a8a8" stroke-width="0.9" fill="none"/></svg><svg style="left:211.00px;top:4.40px" width="5" height="9" viewBox="0 0 5 9"><path d="M0.6 1.1L4.0 4.5L0.6 7.9" stroke="#a8a8a8" stroke-width="0.9" fill="none"/></svg><svg style="left:302.40px;top:4.40px" width="5" height="9" viewBox="0 0 5 9"><path d="M0.6 1.1L4.0 4.5L0.6 7.9" stroke="#a8a8a8" stroke-width="0.9" fill="none"/></svg><svg style="left:315.8px;top:4.80px" width="7" height="8" viewBox="0 0 7 8"><path d="M0 0.8H7M0.6 2.7H4M0.6 4.6H7M0.6 6.5H5.4" stroke="#d0d0d0" stroke-width="1.0" fill="none"/></svg></div>
<div class="a" style="left:740px;top:33.20px;width:283px;height:14.17px;box-sizing:border-box;border:1px solid #2b2b2b;border-right:none"></div>
<div class="a ln" style="left:691.30px;top:33.45px;line-height:14.17px;color:#c6c6c6">1</div>
<div class="a m" style="left:740px;top:33.45px;line-height:14.17px"># SPDX-License-Identifier: Apache-2.0</div>
<div class="a ln" style="left:691.30px;top:47.62px;line-height:14.17px">2</div>
<div class="a ln" style="left:691.30px;top:61.79px;line-height:14.17px">3</div>
<div class="a m" style="left:740px;top:61.79px;line-height:14.17px">CONFIG_SOC_SERIES_NRF91X=y</div>
<div class="a ln" style="left:691.30px;top:75.96px;line-height:14.17px">4</div>
<div class="a m" style="left:740px;top:75.96px;line-height:14.17px">CONFIG_SOC_NRF9160_SICA=y</div>
<div class="a ln" style="left:691.30px;top:90.13px;line-height:14.17px">5</div>
<div class="a m" style="left:740px;top:90.13px;line-height:14.17px">CONFIG_BOARD_NRF9160DK_NRF9160=y</div>
<div class="a ln" style="left:691.30px;top:104.30px;line-height:14.17px">6</div>
<div class="a ln" style="left:691.30px;top:118.47px;line-height:14.17px">7</div>
<div class="a m" style="left:740px;top:118.47px;line-height:14.17px"># Enable MPU</div>
<div class="a ln" style="left:691.30px;top:132.64px;line-height:14.17px">8</div>
<div class="a m" style="left:740px;top:132.64px;line-height:14.17px">CONFIG_ARM_MPU=y</div>
<div class="a ln" style="left:691.30px;top:146.81px;line-height:14.17px">9</div>
<div class="a ln" style="left:691.30px;top:160.98px;line-height:14.17px">10</div>
<div class="a m" style="left:740px;top:160.98px;line-height:14.17px"># Enable hardware stack protection</div>
<div class="a ln" style="left:691.30px;top:175.15px;line-height:14.17px">11</div>
<div class="a m" style="left:740px;top:175.15px;line-height:14.17px">CONFIG_HW_STACK_PROTECTION=y</div>
<div class="a ln" style="left:691.30px;top:189.32px;line-height:14.17px">12</div>
<div class="a ln" style="left:691.30px;top:203.49px;line-height:14.17px">13</div>
<div class="a m" style="left:740px;top:203.49px;line-height:14.17px"># Enable TrustZone-M</div>
<div class="a ln" style="left:691.30px;top:217.66px;line-height:14.17px">14</div>
<div class="a m" style="left:740px;top:217.66px;line-height:14.17px">CONFIG_ARM_TRUSTZONE_M=y</div>
<div class="a ln" style="left:691.30px;top:231.83px;line-height:14.17px">15</div>
<div class="a ln" style="left:691.30px;top:246.00px;line-height:14.17px">16</div>
<div class="a m" style="left:740px;top:246.00px;line-height:14.17px"># enable GPIO</div>
<div class="a ln" style="left:691.30px;top:260.17px;line-height:14.17px">17</div>
<div class="a m" style="left:740px;top:260.17px;line-height:14.17px">CONFIG_GPIO=y</div>
<div class="a ln" style="left:691.30px;top:274.34px;line-height:14.17px">18</div>
<div class="a ln" style="left:691.30px;top:288.51px;line-height:14.17px">19</div>
<div class="a m" style="left:740px;top:288.51px;line-height:14.17px"># Enable uart driver</div>
<div class="a ln" style="left:691.30px;top:302.68px;line-height:14.17px">20</div>
<div class="a m" style="left:740px;top:302.68px;line-height:14.17px">CONFIG_SERIAL=y</div>
<div class="a ln" style="left:691.30px;top:316.85px;line-height:14.17px">21</div>
<div class="a ln" style="left:691.30px;top:331.02px;line-height:14.17px">22</div>
<div class="a m" style="left:740px;top:331.02px;line-height:14.17px"># enable console</div>
<div class="a ln" style="left:691.30px;top:345.19px;line-height:14.17px">23</div>
<div class="a m" style="left:740px;top:345.19px;line-height:14.17px">CONFIG_CONSOLE=y</div>
<div class="a ln" style="left:691.30px;top:359.36px;line-height:14.17px">24</div>
<div class="a m" style="left:740px;top:359.36px;line-height:14.17px">CONFIG_UART_CONSOLE=y</div>
<div class="a ln" style="left:691.30px;top:373.53px;line-height:14.17px">25</div>
<svg style="left:0;top:0" width="1023" height="537" viewBox="0 0 1023 537"><path d="M720.5 88.4L737 87.1L912 87.1L927 88.9Q931.7 89.4 931.7 93L931.7 99.3Q931.7 102.7 927 103.2L904 105.5L743 105.5L721.5 103.6Q716.1 103.2 716.1 99.5L716.1 92.5Q716.1 88.8 720.5 88.4Z" stroke="#ffff00" stroke-width="3" fill="none" stroke-linejoin="round"/></svg>
</body></html>
